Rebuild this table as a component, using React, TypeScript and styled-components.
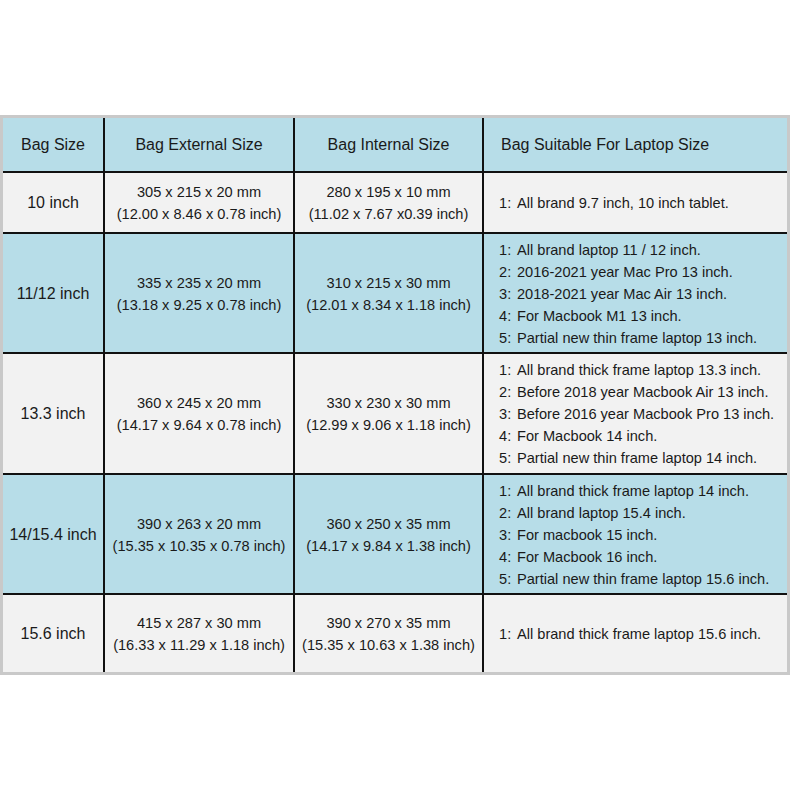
import React from "react";
import styled, { createGlobalStyle } from "styled-components";

const GlobalStyle = createGlobalStyle`
  html, body {
    margin: 0;
    padding: 0;
    background: #ffffff;
  }
  body {
    font-family: "Liberation Sans", Arial, sans-serif;
    color: #1a1a1a;
  }
`;

const Page = styled.div`
  width: 790px;
  height: 790px;
  padding-top: 115px;
  box-sizing: border-box;
`;

const Frame = styled.div`
  border: 3px solid #c9c9c9;
  background: #111111;
  display: grid;
  grid-template-columns: 100px 188px 187px 303px;
  grid-template-rows: 53px 59px 118px 119px 118px 77px;
  gap: 2px;
`;

const Cell = styled.div<{ $blue?: boolean; $left?: boolean; $large?: boolean; $pad?: number }>`
  background: ${(p) => (p.$blue ? "#b7dde8" : "#f2f2f2")};
  display: flex;
  flex-direction: column;
  justify-content: center;
  align-items: ${(p) => (p.$left ? "flex-start" : "center")};
  text-align: ${(p) => (p.$left ? "left" : "center")};
  padding-left: ${(p) => (p.$left ? `${p.$pad ?? 15}px` : "0")};
  padding-top: 1px;
  font-size: ${(p) => (p.$large ? "16px" : "14.6px")};
  line-height: 22px;
  white-space: nowrap;
`;

const SizeLine = styled.div`
  line-height: 22px;
`;

const Item = styled.div`
  display: flex;
  line-height: 22px;
`;

const Num = styled.span`
  display: inline-block;
  width: 18px;
`;

type Row = {
  size: string;
  ext: [string, string];
  int: [string, string];
  fits: string[];
};

const rows: Row[] = [
  {
    size: "10 inch",
    ext: ["305 x 215 x 20 mm", "(12.00 x 8.46 x 0.78 inch)"],
    int: ["280 x 195 x 10 mm", "(11.02 x 7.67 x0.39 inch)"],
    fits: ["All brand 9.7 inch, 10 inch tablet."],
  },
  {
    size: "11/12 inch",
    ext: ["335 x 235 x 20 mm", "(13.18 x 9.25 x 0.78 inch)"],
    int: ["310 x 215 x 30 mm", "(12.01 x 8.34 x 1.18 inch)"],
    fits: [
      "All brand laptop 11 / 12 inch.",
      "2016-2021 year Mac Pro 13 inch.",
      "2018-2021 year Mac Air 13 inch.",
      "For Macbook M1 13 inch.",
      "Partial new thin frame laptop 13 inch.",
    ],
  },
  {
    size: "13.3 inch",
    ext: ["360 x 245 x 20 mm", "(14.17 x 9.64 x 0.78 inch)"],
    int: ["330 x 230 x 30 mm", "(12.99 x 9.06 x 1.18 inch)"],
    fits: [
      "All brand thick frame laptop 13.3 inch.",
      "Before 2018 year Macbook Air 13 inch.",
      "Before 2016 year Macbook Pro 13 inch.",
      "For Macbook 14 inch.",
      "Partial new thin frame laptop 14 inch.",
    ],
  },
  {
    size: "14/15.4 inch",
    ext: ["390 x 263 x 20 mm", "(15.35 x 10.35 x 0.78 inch)"],
    int: ["360 x 250 x 35 mm", "(14.17 x 9.84 x 1.38 inch)"],
    fits: [
      "All brand thick frame laptop 14 inch.",
      "All brand laptop 15.4 inch.",
      "For macbook 15 inch.",
      "For Macbook 16 inch.",
      "Partial new thin frame laptop 15.6 inch.",
    ],
  },
  {
    size: "15.6 inch",
    ext: ["415 x 287 x 30 mm", "(16.33 x 11.29 x 1.18 inch)"],
    int: ["390 x 270 x 35 mm", "(15.35 x 10.63 x 1.38 inch)"],
    fits: ["All brand thick frame laptop 15.6 inch."],
  },
];

const App: React.FC = () => {
  return (
    <Page>
      <GlobalStyle />
      <Frame>
        <Cell $blue $large>Bag Size</Cell>
        <Cell $blue $large>Bag External Size</Cell>
        <Cell $blue $large>Bag Internal Size</Cell>
        <Cell $blue $large $left $pad={17}>Bag Suitable For Laptop Size</Cell>
        {rows.map((row, i) => {
          const blue = i % 2 === 1;
          return (
            <React.Fragment key={row.size}>
              <Cell $blue={blue} $large>{row.size}</Cell>
              <Cell $blue={blue}>
                <SizeLine>{row.ext[0]}</SizeLine>
                <SizeLine>{row.ext[1]}</SizeLine>
              </Cell>
              <Cell $blue={blue}>
                <SizeLine>{row.int[0]}</SizeLine>
                <SizeLine>{row.int[1]}</SizeLine>
              </Cell>
              <Cell $blue={blue} $left>
                {row.fits.map((f, j) => (
                  <Item key={j}>
                    <Num>{j + 1}:</Num>
                    {f}
                  </Item>
                ))}
              </Cell>
            </React.Fragment>
          );
        })}
      </Frame>
    </Page>
  );
};

export default App;
